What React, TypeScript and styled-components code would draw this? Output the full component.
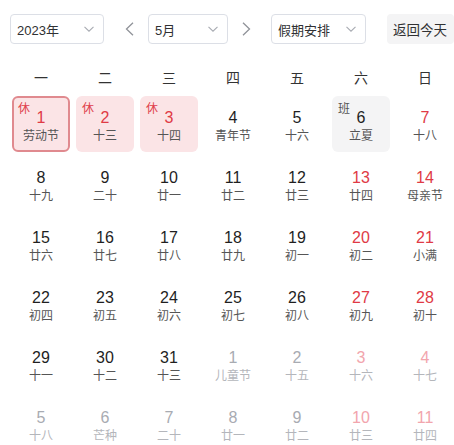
import React from "react";
import styled, { createGlobalStyle } from "styled-components";

const Global = createGlobalStyle`
  html, body { margin: 0; padding: 0; overflow: hidden; background: #fff; }
  body { font-family: "Liberation Sans", "Noto Sans CJK SC", sans-serif; color: #1f1f1f; }
`;

const Page = styled.div`
  width: 454px;
  height: 445px;
  overflow: hidden;
  position: relative;
`;

const Toolbar = styled.div`
  display: flex;
  align-items: center;
  padding: 14px 0 0 10px;
  height: 30px;
`;

const Select = styled.div<{ $w: number }>`
  box-sizing: border-box;
  width: ${(p) => p.$w}px;
  height: 30px;
  border: 1px solid #dcdfe6;
  border-radius: 4px;
  display: flex;
  align-items: center;
  justify-content: space-between;
  padding: 0 9px 0 6px;
  font-size: 13px;
  color: #303133;
  background: #fff;
`;

const Chevron = () => (
  <svg width="10" height="6" viewBox="0 0 10 6">
    <polyline points="0.5,0.8 5,5.2 9.5,0.8" fill="none" stroke="#a8abb2" strokeWidth="1.1" />
  </svg>
);

const ArrowBtn = styled.div<{ $ml: number; $mr: number }>`
  width: 10px;
  height: 16px;
  margin: 0 ${(p) => p.$mr}px 0 ${(p) => p.$ml}px;
  display: flex;
  align-items: center;
  justify-content: center;
`;

const Arrow = ({ dir }: { dir: "l" | "r" }) => (
  <svg width="9" height="14" viewBox="0 0 9 14">
    <polyline
      points={dir === "l" ? "8,0.8 1.5,7 8,13.2" : "1,0.8 7.5,7 1,13.2"}
      fill="none"
      stroke="#909399"
      strokeWidth="1.3"
    />
  </svg>
);

const TodayBtn = styled.div`
  box-sizing: border-box;
  height: 30px;
  margin-left: 21px;
  padding: 0 7px 0 6px;
  display: flex;
  align-items: center;
  background: #f4f4f5;
  border-radius: 4px;
  font-size: 13.5px;
  color: #303133;
  white-space: nowrap;
`;

const Grid = styled.div`
  display: grid;
  grid-template-columns: repeat(7, 64px);
  grid-template-rows: 32px;
  grid-auto-rows: 60px;
  margin: 18px 0 0 9px;
  width: 448px;
`;

const WeekHead = styled.div`
  display: flex;
  align-items: center;
  justify-content: center;
  font-size: 14px;
  color: #333;
  padding-bottom: 2px;
`;

type Kind = "holiday" | "work" | "normal";

const CellWrap = styled.div`
  padding: 2px 3px;
  display: flex;
`;

const Cell = styled.div<{ $kind: Kind; $selected: boolean }>`
  position: relative;
  box-sizing: border-box;
  flex: 1;
  border-radius: 6px;
  display: flex;
  flex-direction: column;
  align-items: center;
  justify-content: center;
  padding-top: 4px;
  background: ${(p) =>
    p.$kind === "holiday" ? "#fbe4e6" : p.$kind === "work" ? "#f4f4f5" : "transparent"};
  border: 2px solid ${(p) => (p.$selected ? "#e08a8f" : "transparent")};
`;

const Badge = styled.span<{ $kind: Kind }>`
  position: absolute;
  top: 4px;
  left: 4px;
  font-size: 12px;
  line-height: 14px;
  color: ${(p) => (p.$kind === "holiday" ? "#e0404b" : "#555")};
`;

type Tone = "normal" | "red" | "muted" | "mutedRed";

const numColor: Record<Tone, string> = {
  normal: "#1f1f1f",
  red: "#e03a45",
  muted: "#a8abb2",
  mutedRed: "#f2a5ad",
};
const lunarColor: Record<Tone, string> = {
  normal: "#555",
  red: "#555",
  muted: "#b4b6bb",
  mutedRed: "#b4b6bb",
};

const DayNum = styled.div<{ $tone: Tone }>`
  font-size: 16px;
  line-height: 20px;
  color: ${(p) => numColor[p.$tone]};
`;

const Lunar = styled.div<{ $tone: Tone }>`
  font-size: 12px;
  line-height: 16px;
  color: ${(p) => lunarColor[p.$tone]};
  white-space: nowrap;
`;

type Day = { d: number; l: string; other?: boolean; kind?: Kind; sel?: boolean };

const rows: Day[][] = [
  [
    { d: 1, l: "劳动节", kind: "holiday", sel: true },
    { d: 2, l: "十三", kind: "holiday" },
    { d: 3, l: "十四", kind: "holiday" },
    { d: 4, l: "青年节" },
    { d: 5, l: "十六" },
    { d: 6, l: "立夏", kind: "work" },
    { d: 7, l: "十八" },
  ],
  [
    { d: 8, l: "十九" },
    { d: 9, l: "二十" },
    { d: 10, l: "廿一" },
    { d: 11, l: "廿二" },
    { d: 12, l: "廿三" },
    { d: 13, l: "廿四" },
    { d: 14, l: "母亲节" },
  ],
  [
    { d: 15, l: "廿六" },
    { d: 16, l: "廿七" },
    { d: 17, l: "廿八" },
    { d: 18, l: "廿九" },
    { d: 19, l: "初一" },
    { d: 20, l: "初二" },
    { d: 21, l: "小满" },
  ],
  [
    { d: 22, l: "初四" },
    { d: 23, l: "初五" },
    { d: 24, l: "初六" },
    { d: 25, l: "初七" },
    { d: 26, l: "初八" },
    { d: 27, l: "初九" },
    { d: 28, l: "初十" },
  ],
  [
    { d: 29, l: "十一" },
    { d: 30, l: "十二" },
    { d: 31, l: "十三" },
    { d: 1, l: "儿童节", other: true },
    { d: 2, l: "十五", other: true },
    { d: 3, l: "十六", other: true },
    { d: 4, l: "十七", other: true },
  ],
  [
    { d: 5, l: "十八", other: true },
    { d: 6, l: "芒种", other: true },
    { d: 7, l: "二十", other: true },
    { d: 8, l: "廿一", other: true },
    { d: 9, l: "廿二", other: true },
    { d: 10, l: "廿三", other: true },
    { d: 11, l: "廿四", other: true },
  ],
];

const weekdays = ["一", "二", "三", "四", "五", "六", "日"];

function toneOf(day: Day, col: number): Tone {
  const weekend = col >= 5 && day.kind !== "work";
  const red = weekend || day.kind === "holiday";
  if (day.other) return red ? "mutedRed" : "muted";
  return red ? "red" : "normal";
}

export default function App() {
  return (
    <Page>
      <Global />
      <Toolbar>
        <Select $w={94}>
          <span>2023年</span>
          <Chevron />
        </Select>
        <ArrowBtn $ml={20} $mr={14}>
          <Arrow dir="l" />
        </ArrowBtn>
        <Select $w={80}>
          <span>5月</span>
          <Chevron />
        </Select>
        <ArrowBtn $ml={13} $mr={20}>
          <Arrow dir="r" />
        </ArrowBtn>
        <Select $w={95}>
          <span>假期安排</span>
          <Chevron />
        </Select>
        <TodayBtn>返回今天</TodayBtn>
      </Toolbar>
      <Grid>
        {weekdays.map((w) => (
          <WeekHead key={w}>{w}</WeekHead>
        ))}
        {rows.map((row, ri) =>
          row.map((day, ci) => {
            const kind: Kind = day.kind ?? "normal";
            const tone = toneOf(day, ci);
            return (
              <CellWrap key={`${ri}-${ci}`}>
                <Cell $kind={kind} $selected={!!day.sel}>
                  {kind !== "normal" && (
                    <Badge $kind={kind}>{kind === "holiday" ? "休" : "班"}</Badge>
                  )}
                  <DayNum $tone={tone}>{day.d}</DayNum>
                  <Lunar $tone={tone}>{day.l}</Lunar>
                </Cell>
              </CellWrap>
            );
          })
        )}
      </Grid>
    </Page>
  );
}
